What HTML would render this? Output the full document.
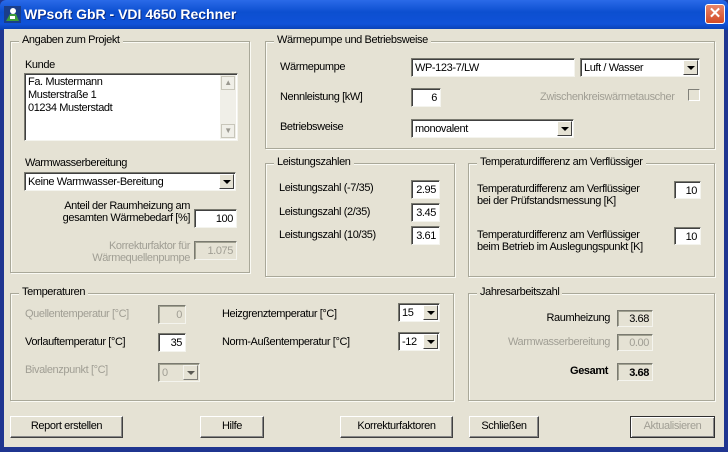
<!DOCTYPE html>
<html><head><meta charset="utf-8"><style>
*{margin:0;padding:0;box-sizing:border-box}
body{width:728px;height:452px;overflow:hidden;background:#1f3590;font-family:"Liberation Sans",sans-serif;font-size:11px;letter-spacing:-0.4px;color:#000;position:relative}
.a{position:absolute}
#title{left:0;top:0;width:728px;height:30px;background:linear-gradient(#2a6ae8,#0c4fd0 40%,#1052d8 80%,#0a3fb0);border-radius:6px 6px 0 0}
#title span{position:absolute;left:24px;top:6px;color:#fff;font-weight:bold;font-size:14px;letter-spacing:0;text-shadow:1px 1px #0a2a80}
#close{left:705px;top:4px;width:20px;height:20px;background:linear-gradient(#e8866a,#d24a26);border:1px solid #fff;border-radius:3px;color:#fff;font-weight:bold;font-size:15px;text-align:center;line-height:17px;letter-spacing:0}
#body{left:4px;top:29px;width:720px;height:418px;background:#e5e2d4}
.g{position:absolute;border:1px solid #a9a899;box-shadow:inset 1px 1px #fafaf4,1px 1px #fafaf4}
.g>b{position:absolute;top:-8px;left:8px;background:#e5e2d4;padding:0 3px;font-weight:normal;white-space:nowrap}
.in{position:absolute;background:#fff;border:1px solid;border-color:#7a7a70 #f4f4ee #f4f4ee #7a7a70;box-shadow:inset 1px 1px #404040;padding:3px 3px 0;text-align:right;line-height:13px;white-space:nowrap;overflow:hidden}
.dis{background:#e5e2d4;color:#a09e94;box-shadow:inset 1px 1px #a0a090}
.l{text-align:left}
.sel .ar{position:absolute;right:1px;top:1px;bottom:1px;width:15px;background:#e5e2d4;border:1px solid;border-color:#fff #404040 #404040 #fff}
.sel .ar:after{content:"";position:absolute;left:3px;top:5px;border:4px solid transparent;border-top:4px solid #000;border-bottom:0}
.gr{color:#a09e94}
.bt{position:absolute;height:22px;background:#e5e2d4;border:1px solid;border-color:#fff #404040 #404040 #fff;box-shadow:inset -1px -1px #888;text-align:center;line-height:19px}
.t{position:absolute;white-space:nowrap;line-height:12px}
</style></head><body>
<div id="title" class="a"><svg class="a" style="left:4px;top:6px" width="17" height="17"><rect width="17" height="17" fill="#1a3e8a"/><circle cx="9" cy="5" r="3" fill="#fff"/><path d="M2 15 L6 8 L12 8 L15 15 Z" fill="#3c9a3c"/><rect x="6" y="10" width="5" height="3" fill="#fff"/></svg><span>WPsoft GbR - VDI 4650 Rechner</span></div>
<div id="close" class="a">✕</div>
<div id="body" class="a"></div>

<div class="g" style="left:10px;top:41px;width:240px;height:232px"><b>Angaben zum Projekt</b></div>
<div class="t" style="left:25px;top:59px">Kunde</div>
<div class="in l" style="left:24px;top:73px;width:214px;height:68px;line-height:13px;padding:2px 3px;white-space:normal">Fa. Mustermann<br>Musterstraße 1<br>01234 Musterstadt
<div class="a" style="right:1px;top:1px;width:16px;height:64px;background:#f0efe8"><div class="a" style="left:1px;top:1px;width:14px;height:14px;border:1px solid #c8c6ba;color:#9a9890;font-size:8px;text-align:center;line-height:12px">▲</div><div class="a" style="left:1px;bottom:1px;width:14px;height:14px;border:1px solid #c8c6ba;color:#9a9890;font-size:8px;text-align:center;line-height:12px">▼</div></div></div>
<div class="t" style="left:25px;top:157px">Warmwasserbereitung</div>
<div class="in l sel" style="left:24px;top:172px;width:212px;height:19px">Keine Warmwasser-Bereitung<div class="ar"></div></div>
<div class="t" style="left:40px;top:200px;width:150px;text-align:right">Anteil der Raumheizung am<br>gesamten Wärmebedarf [%]</div>
<div class="in" style="left:194px;top:209px;width:43px;height:19px">100</div>
<div class="t gr" style="left:40px;top:240px;width:150px;text-align:right">Korrekturfaktor für<br>Wärmequellenpumpe</div>
<div class="in dis" style="left:194px;top:241px;width:43px;height:19px">1.075</div>

<div class="g" style="left:265px;top:41px;width:450px;height:108px"><b>Wärmepumpe und Betriebsweise</b></div>
<div class="t" style="left:280px;top:61px">Wärmepumpe</div>
<div class="in l" style="left:411px;top:58px;width:164px;height:19px">WP-123-7/LW</div>
<div class="in l sel" style="left:580px;top:58px;width:120px;height:19px">Luft / Wasser<div class="ar"></div></div>
<div class="t" style="left:280px;top:91px">Nennleistung [kW]</div>
<div class="in" style="left:411px;top:88px;width:30px;height:19px">6</div>
<div class="t gr" style="left:540px;top:91px">Zwischenkreiswärmetauscher</div>
<div class="a" style="left:688px;top:89px;width:12px;height:12px;border:1px solid;border-color:#808078 #fff #fff #808078"></div>
<div class="t" style="left:280px;top:121px">Betriebsweise</div>
<div class="in l sel" style="left:411px;top:119px;width:163px;height:19px">monovalent<div class="ar"></div></div>

<div class="g" style="left:265px;top:163px;width:190px;height:114px"><b>Leistungszahlen</b></div>
<div class="t" style="left:279px;top:182px">Leistungszahl (-7/35)</div>
<div class="t" style="left:279px;top:206px">Leistungszahl (2/35)</div>
<div class="t" style="left:279px;top:229px">Leistungszahl (10/35)</div>
<div class="in" style="left:411px;top:180px;width:29px;height:19px">2.95</div>
<div class="in" style="left:411px;top:203px;width:29px;height:19px">3.45</div>
<div class="in" style="left:411px;top:226px;width:29px;height:19px">3.61</div>

<div class="g" style="left:468px;top:163px;width:247px;height:114px"><b>Temperaturdifferenz am Verflüssiger</b></div>
<div class="t" style="left:477px;top:183px">Temperaturdifferenz am Verflüssiger<br>bei der Prüfstandsmessung [K]</div>
<div class="in" style="left:674px;top:181px;width:27px;height:18px">10</div>
<div class="t" style="left:477px;top:229px">Temperaturdifferenz am Verflüssiger<br>beim Betrieb im Auslegungspunkt [K]</div>
<div class="in" style="left:674px;top:227px;width:27px;height:18px">10</div>

<div class="g" style="left:10px;top:293px;width:444px;height:108px"><b>Temperaturen</b></div>
<div class="t gr" style="left:25px;top:308px">Quellentemperatur [°C]</div>
<div class="in dis" style="left:158px;top:305px;width:28px;height:19px">0</div>
<div class="t" style="left:25px;top:336px">Vorlauftemperatur [°C]</div>
<div class="in" style="left:158px;top:333px;width:28px;height:19px">35</div>
<div class="t gr" style="left:25px;top:364px">Bivalenzpunkt [°C]</div>
<div class="in l dis sel" style="left:158px;top:363px;width:42px;height:19px">0<div class="ar" style="opacity:.6"></div></div>
<div class="t" style="left:222px;top:308px">Heizgrenztemperatur [°C]</div>
<div class="in l sel" style="left:398px;top:303px;width:42px;height:19px">15<div class="ar"></div></div>
<div class="t" style="left:222px;top:336px">Norm-Außentemperatur [°C]</div>
<div class="in l sel" style="left:398px;top:332px;width:42px;height:19px">-12<div class="ar"></div></div>

<div class="g" style="left:468px;top:293px;width:247px;height:108px"><b>Jahresarbeitszahl</b></div>
<div class="t" style="left:500px;top:312px;width:110px;text-align:right">Raumheizung</div>
<div class="in dis" style="left:617px;top:310px;width:36px;height:17px;padding-top:2px;color:#000">3.68</div>
<div class="t gr" style="left:480px;top:336px;width:130px;text-align:right">Warmwasserbereitung</div>
<div class="in dis" style="left:617px;top:334px;width:36px;height:17px;padding-top:2px">0.00</div>
<div class="t" style="left:500px;top:365px;width:108px;text-align:right;font-weight:bold">Gesamt</div>
<div class="in dis" style="left:617px;top:363px;width:36px;height:18px;color:#000;font-weight:bold">3.68</div>

<div class="bt" style="left:10px;top:416px;width:113px">Report erstellen</div>
<div class="bt" style="left:200px;top:416px;width:64px">Hilfe</div>
<div class="bt" style="left:340px;top:416px;width:113px">Korrekturfaktoren</div>
<div class="bt" style="left:469px;top:416px;width:70px">Schließen</div>
<div class="bt gr" style="left:630px;top:416px;width:85px;border:1px solid #303030;box-shadow:inset 1px 1px #fff,inset -1px -1px #888">Aktualisieren</div>
</body></html>
